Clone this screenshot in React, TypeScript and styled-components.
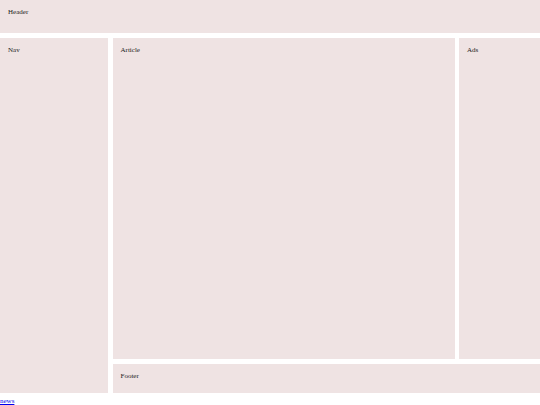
import React from "react";
import styled, { createGlobalStyle } from "styled-components";

const Global = createGlobalStyle`
  html, body {
    margin: 0;
    padding: 0;
    background: #ffffff;
    font-family: "Liberation Serif", "Times New Roman", serif;
    font-size: 7px;
    line-height: 8px;
    color: #000;
  }
`;

const Layout = styled.div`
  display: grid;
  width: 540px;
  grid-template-columns: 108px 1fr 81px;
  grid-template-rows: 33px 321px 29px;
  column-gap: 4.5px;
  row-gap: 5px;
`;

const Box = styled.div<{ $area: string }>`
  grid-area: ${(p) => p.$area};
  background: #efe3e3;
  padding: 8px;
  box-sizing: border-box;
  color: #222;
`;

const NewsLink = styled.a`
  display: inline-block;
  margin-top: 4px;
  color: #0000ee;
  text-decoration: underline;
`;

export default function App() {
  return (
    <>
      <Global />
      <Layout>
        <Box $area="1 / 1 / 2 / 4">Header</Box>
        <Box $area="2 / 1 / 4 / 2">Nav</Box>
        <Box $area="2 / 2 / 3 / 3">Article</Box>
        <Box $area="2 / 3 / 3 / 4">Ads</Box>
        <Box $area="3 / 2 / 4 / 4">Footer</Box>
      </Layout>
      <NewsLink href="#news">news</NewsLink>
    </>
  );
}
